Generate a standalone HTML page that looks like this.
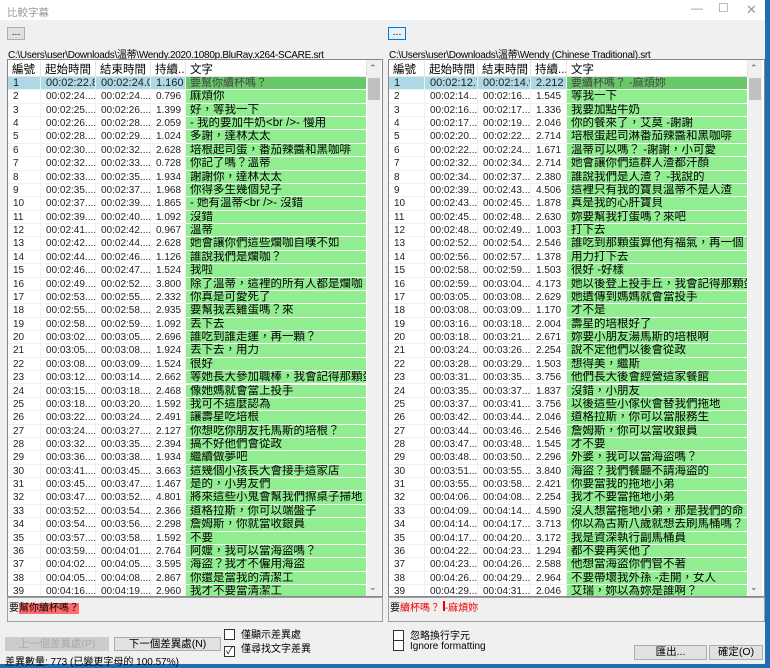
<!DOCTYPE html>
<html><head><meta charset="utf-8"><style>
*{box-sizing:border-box;margin:0;padding:0}
body{width:770px;height:667px;overflow:hidden;background:#1f6fb0;font-family:"Liberation Sans","Noto Sans CJK TC",sans-serif;position:relative}
.win{position:absolute;left:0;top:0;width:765px;height:664px;background:#f0f0f0}
.title{position:absolute;left:0;top:0;width:765px;height:20px;background:#fff;font-size:10.5px;color:#999;padding:5px 0 0 7px}
.tb{position:absolute;top:3px;font-size:12px;color:#999}
.btn{position:absolute;background:#e1e1e1;border:1px solid #adadad;font-size:10.5px;text-align:center;color:#000}
.path{position:absolute;font-size:10px;color:#000;letter-spacing:-0.3px;white-space:nowrap}
.list{position:absolute;top:59px;height:538px;background:#fff;border:1px solid #828790;overflow:hidden}
.hdr{position:absolute;left:0;top:0;height:17px;width:100%;background:#fff;font-size:11.5px;border-bottom:1px solid #e5e5e5}
.hdr span{position:absolute;top:1px;padding-left:4px;border-right:1px solid #e5e5e5;height:16px;white-space:nowrap;overflow:hidden}
.row{position:absolute;left:0;height:13.37px;font-size:10px;line-height:13px}
.row span{position:absolute;top:0;height:13.37px;padding-left:5px;white-space:nowrap;overflow:hidden;border-right:1px solid #f0f0f0;border-bottom:1px solid #f0f0f0;color:#222}
.row span.t{background:#90ee90;font-size:11.5px;color:#000;border-color:#fff;padding-left:4px;line-height:13px}
.row.sel span{background:#add8e6;font-size:11px}
.row.sel span.t{background:#66c866;color:#444;font-size:11px}
.sb{position:absolute;top:0;width:14px;height:100%;background:#f0f0f0}
.sb .th{position:absolute;left:1px;top:18px;width:12px;height:22px;background:#c0c0c0}
.sb .a{position:absolute;left:2px;font-size:9px;color:#555}
.diff{position:absolute;top:597px;height:25px;background:#f0f0f0;border:1px solid #a0a0a0;font-size:10px;padding:1px 0 0 1px}
.cb{position:absolute;font-size:10px;white-space:nowrap}
.cb i{display:inline-block;width:11px;height:11px;border:1px solid #333;background:#fff;vertical-align:-2px;margin-right:6px;font-style:normal;font-size:10px;line-height:9px;text-align:center}
</style></head><body>
<div class="win">
<div class="title">比較字幕</div>
<div class="tb" style="left:691px;top:1px">&#8212;</div>
<div class="tb" style="left:718px;top:1px">&#9744;</div>
<div class="tb" style="left:746px;top:2px;font-size:13px">&#10005;</div>
<div class="btn" style="left:7px;top:27px;width:18px;height:13px;line-height:9px">...</div>
<div class="btn" style="left:388px;top:27px;width:18px;height:13px;line-height:9px;border-color:#0078d7;background:#e5f1fb">...</div>
<div class="path" style="left:8px;top:46px">C:\Users\user\Downloads\溫蒂\Wendy.2020.1080p.BluRay.x264-SCARE.srt</div>
<div class="path" style="left:389px;top:46px">C:\Users\user\Downloads\溫蒂\Wendy (Chinese Traditional).srt</div>
<div class="list" id="L" style="left:7px;width:376px"></div>
<div class="list" id="R" style="left:388px;width:377px"></div>
<div class="diff" style="left:7px;width:376px">要<span style="background:#ff6b6b">幫你續杯嗎？</span></div>
<div class="diff" style="left:388px;width:377px">要<span style="color:#e00">續杯嗎？ <span style="background:#e00;display:inline-block;width:2px;height:10px"></span>-麻煩妳</span></div>
<div class="btn" style="left:5px;top:637px;width:104px;height:14px;line-height:12px;color:#aaa;background:#ccc;border-color:#ccc">上一個差異處(P)</div>
<div class="btn" style="left:114px;top:637px;width:107px;height:14px;line-height:12px">下一個差異處(N)</div>
<div class="cb" style="left:224px;top:626px"><i></i>僅顯示差異處</div>
<div class="cb" style="left:224px;top:640px"><i>&#10003;</i>僅尋找文字差異</div>
<div class="cb" style="left:393px;top:627px"><i></i>忽略換行字元</div>
<div class="cb" style="left:393px;top:640px"><i></i>Ignore formatting</div>
<div style="position:absolute;left:5px;top:653px;font-size:10px">差異數量: 773 (已變更字母的 100.57%)</div>
<div class="btn" style="left:634px;top:645px;width:73px;height:15px;line-height:13px">匯出...</div>
<div class="btn" style="left:709px;top:645px;width:54px;height:15px;line-height:13px">確定(O)</div>
</div>
<script>
var L=[["00:02:22.89","00:02:24.05","1.160","要幫你續杯嗎？"],["00:02:24","00:02:24","0.796","麻煩你"],["00:02:25","00:02:26","1.399","好，等我一下"],["00:02:26","00:02:28","2.059","- 我的要加牛奶<br />- 慢用"],["00:02:28","00:02:29","1.024","多謝，達林太太"],["00:02:30","00:02:32","2.628","培根起司蛋，番茄辣醬和黑咖啡"],["00:02:32","00:02:33","0.728","你記了嗎？溫蒂"],["00:02:33","00:02:35","1.934","謝謝你，達林太太"],["00:02:35","00:02:37","1.968","你得多生幾個兒子"],["00:02:37","00:02:39","1.865","- 她有溫蒂<br />- 沒錯"],["00:02:39","00:02:40","1.092","沒錯"],["00:02:41","00:02:42","0.967","溫蒂"],["00:02:42","00:02:44","2.628","她會讓你們這些爛咖自嘆不如"],["00:02:44","00:02:46","1.126","誰說我們是爛咖？"],["00:02:46","00:02:47","1.524","我啦"],["00:02:49","00:02:52","3.800","除了溫蒂，這裡的所有人都是爛咖"],["00:02:53","00:02:55","2.332","你真是可愛死了"],["00:02:55","00:02:58","2.935","要幫我丟雞蛋嗎？來"],["00:02:58","00:02:59","1.092","丟下去"],["00:03:02","00:03:05","2.696","誰吃到誰走運，再一顆？"],["00:03:05","00:03:08","1.924","丟下去，用力"],["00:03:08","00:03:09","1.524","很好"],["00:03:12","00:03:14","2.662","等她長大參加職棒，我會記得那顆蛋"],["00:03:15","00:03:18","2.468","像她媽就會當上投手"],["00:03:18","00:03:20","1.592","我可不這麼認為"],["00:03:22","00:03:24","2.491","讓壽星吃培根"],["00:03:24","00:03:27","2.127","你想吃你朋友托馬斯的培根？"],["00:03:32","00:03:35","2.394","搞不好他們會從政"],["00:03:36","00:03:38","1.934","繼續做夢吧"],["00:03:41","00:03:45","3.663","這幾個小孩長大會接手這家店"],["00:03:45","00:03:47","1.467","是的，小男友們"],["00:03:47","00:03:52","4.801","將來這些小鬼會幫我們擦桌子掃地"],["00:03:52","00:03:54","2.366","道格拉斯，你可以端盤子"],["00:03:54","00:03:56","2.298","詹姆斯，你就當收銀員"],["00:03:57","00:03:58","1.592","不要"],["00:03:59","00:04:01","2.764","阿嬤，我可以當海盜嗎？"],["00:04:02","00:04:05","3.595","海盜？我才不僱用海盜"],["00:04:05","00:04:08","2.867","你還是當我的清潔工"],["00:04:16","00:04:19","2.960","我才不要當清潔工"]];
var R=[["00:02:12.70","00:02:14.92","2.212","要續杯嗎？ -麻煩妳"],["00:02:14","00:02:16","1.545","等我一下"],["00:02:16","00:02:17","1.336","我要加點牛奶"],["00:02:17","00:02:19","2.046","你的餐來了，艾莫 -謝謝"],["00:02:20","00:02:22","2.714","培根蛋起司淋番茄辣醬和黑咖啡"],["00:02:22","00:02:24","1.671","溫蒂可以嗎？ -謝謝，小可愛"],["00:02:32","00:02:34","2.714","她會讓你們這群人渣都汗顏"],["00:02:34","00:02:37","2.380","誰說我們是人渣？ -我說的"],["00:02:39","00:02:43","4.506","這裡只有我的寶貝溫蒂不是人渣"],["00:02:43","00:02:45","1.878","真是我的心肝寶貝"],["00:02:45","00:02:48","2.630","妳要幫我打蛋嗎？來吧"],["00:02:48","00:02:49","1.003","打下去"],["00:02:52","00:02:54","2.546","誰吃到那顆蛋算他有福氣，再一個？"],["00:02:56","00:02:57","1.378","用力打下去"],["00:02:58","00:02:59","1.503","很好 -好樣"],["00:02:59","00:03:04","4.173","她以後登上投手丘，我會記得那顆蛋"],["00:03:05","00:03:08","2.629","她遺傳到媽媽就會當投手"],["00:03:08","00:03:09","1.170","才不是"],["00:03:16","00:03:18","2.004","壽星的培根好了"],["00:03:18","00:03:21","2.671","妳要小朋友湯馬斯的培根啊"],["00:03:24","00:03:26","2.254","說不定他們以後會從政"],["00:03:28","00:03:29","1.503","想得美，繼斯"],["00:03:31","00:03:35","3.756","他們長大後會經營這家餐館"],["00:03:35","00:03:37","1.837","沒錯，小朋友"],["00:03:37","00:03:41","3.756","以後這些小傢伙會替我們拖地"],["00:03:42","00:03:44","2.046","道格拉斯，你可以當服務生"],["00:03:44","00:03:46","2.546","詹姆斯，你可以當收銀員"],["00:03:47","00:03:48","1.545","才不要"],["00:03:48","00:03:50","2.296","外婆，我可以當海盜嗎？"],["00:03:51","00:03:55","3.840","海盜？我們餐廳不請海盜的"],["00:03:55","00:03:58","2.421","你要當我的拖地小弟"],["00:04:06","00:04:08","2.254","我才不要當拖地小弟"],["00:04:09","00:04:14","4.590","沒人想當拖地小弟，那是我們的命"],["00:04:14","00:04:17","3.713","你以為古斯八歲就想去刷馬桶嗎？"],["00:04:17","00:04:20","3.172","我是資深執行副馬桶員"],["00:04:22","00:04:23","1.294","都不要再笑他了"],["00:04:23","00:04:26","2.588","他想當海盜你們管不著"],["00:04:26","00:04:29","2.964","不要帶壞我外孫 -走開，女人"],["00:04:29","00:04:31","2.046","艾瑞，妳以為妳是誰啊？"]];
function esc(s){return s.replace(/&/g,"&amp;").replace(/</g,"&lt;").replace(/>/g,"&gt;");}
function build(id,data,c){
var el=document.getElementById(id),h='<div class="hdr">';
var names=["編號","起始時間","結束時間","持續...","文字"];
for(var i=0;i<5;i++)h+='<span style="left:'+c[i]+'px;width:'+(c[i+1]-c[i])+'px">'+names[i]+'</span>';
h+='</div>';
for(var r=0;r<data.length;r++){
var d=data[r],v=[String(r+1),r==0?d[0]:d[0]+"....",r==0?d[1]:d[1]+"....",d[2],esc(d[3])];
h+='<div class="row'+(r==0?' sel':'')+'" style="top:'+(17+r*13.37)+'px">';
for(var i=0;i<5;i++){h+='<span class="'+(i==4?'t':'')+'" style="left:'+c[i]+'px;width:'+(c[i+1]-c[i])+'px">'+v[i]+'</span>';}
h+='</div>';}
h+='<div class="sb" style="left:'+c[5]+'px"><div class="a" style="top:3px">&#8963;</div><div class="th"></div><div class="a" style="bottom:3px">&#8964;</div></div>';
el.innerHTML=h;}
build("L",L,[0,33,88,143,178,359]);
build("R",R,[0,36,89,142,178,359]);
</script>
</body></html>
